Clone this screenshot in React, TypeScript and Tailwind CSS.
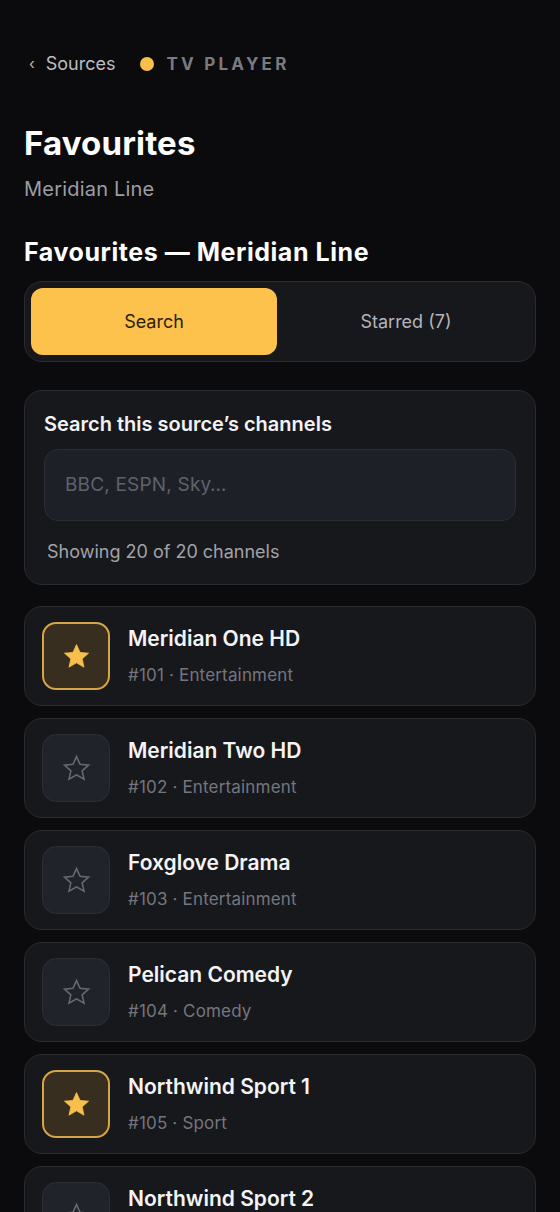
import React from "react";

const channels = [
  { num: 101, name: "Meridian One HD", cat: "Entertainment", starred: true },
  { num: 102, name: "Meridian Two HD", cat: "Entertainment", starred: false },
  { num: 103, name: "Foxglove Drama", cat: "Entertainment", starred: false },
  { num: 104, name: "Pelican Comedy", cat: "Comedy", starred: false },
  { num: 105, name: "Northwind Sport 1", cat: "Sport", starred: true },
  { num: 106, name: "Northwind Sport 2", cat: "Sport", starred: false },
];

function Star({ filled }: { filled: boolean }) {
  return (
    <svg width="31" height="31" viewBox="0 0 24 24">
      <path
        d="M12 2.8l2.75 6.02 6.58.62-4.96 4.38 1.44 6.45L12 16.9l-5.81 3.37 1.44-6.45-4.96-4.38 6.58-.62z"
        fill={filled ? "#f8c04b" : "none"}
        stroke={filled ? "#f8c04b" : "#676a72"}
        strokeWidth={filled ? 0.6 : 1.2}
        strokeLinejoin="miter"
      />
    </svg>
  );
}

export default function App() {
  return (
    <div
      className="min-h-[1212px] bg-[#0b0b0d] px-6 pt-[52px] text-white"
      style={{ fontFamily: "Inter, 'Noto Sans', sans-serif" }}
    >
      <div className="flex h-6 items-center">
        <span className="ml-[5px] text-[15px] leading-6 text-[#b9b9be]">‹</span>
        <span className="ml-[11px] text-[18px] leading-6 text-[#bcbcc1]">Sources</span>
        <span className="ml-[24px] h-[14px] w-[14px] rounded-full bg-[#f8c04b]"></span>
        <span className="ml-[13px] text-[17px] font-bold leading-6 tracking-[0.19em] text-[#7a7a80]">
          TV PLAYER
        </span>
      </div>

      <h1 className="mt-[47px] text-[33px] font-bold leading-10 tracking-[0.005em]">Favourites</h1>
      <div className="mt-3 text-[20px] leading-7 tracking-[0.01em] text-[#9d9da3]">Meridian Line</div>
      <h2 className="mt-[33px] text-[25px] font-bold leading-8 tracking-[0.022em]">
        Favourites — Meridian Line
      </h2>

      <div className="mt-[13px] flex h-[81px] gap-[6px] rounded-[18px] border border-[#2a2b31] bg-[#17181c] p-[6px]">
        <div className="flex flex-1 items-center justify-center rounded-[12px] bg-[#fdc24b] text-[18px] text-[#2a1e08]">
          Search
        </div>
        <div className="flex flex-1 items-center justify-center text-[18px] text-[#b4b4ba]">
          Starred (7)
        </div>
      </div>

      <div className="mt-[28px] rounded-[18px] border border-[#2a2b31] bg-[#17181c] px-[19px] pb-5 pt-5">
        <div className="text-[20px] font-semibold leading-[26px] text-[#f2f2f4]">
          Search this source’s channels
        </div>
        <div className="mt-3 flex h-[72px] items-center rounded-[14px] border border-[#2b2e36] bg-[#1e2028] px-5 text-[19px] tracking-[0.01em] text-[#5f626b]">
          BBC, ESPN, Sky…
        </div>
        <div className="mt-[19px] pl-[3px] text-[18px] leading-6 text-[#a2a2a8]">
          Showing 20 of 20 channels
        </div>
      </div>

      <div className="mt-[21px] flex flex-col gap-3 pb-10">
        {channels.map((c) => (
          <div
            key={c.num}
            className="flex h-[100px] items-center rounded-[18px] border border-[#2a2b31] bg-[#17181c] pl-[17px]"
          >
            <div
              className={
                c.starred
                  ? "flex h-[68px] w-[68px] items-center justify-center rounded-[14px] border-2 border-[#d6a548] bg-[#372e1f]"
                  : "flex h-[68px] w-[68px] items-center justify-center rounded-[14px] border border-[#2c2f36] bg-[#21232a]"
              }
            >
              <Star filled={c.starred} />
            </div>
            <div className="ml-[18px] flex flex-col">
              <div className="text-[21px] font-semibold leading-7 text-[#f4f4f6]">{c.name}</div>
              <div className="mt-[10px] text-[17px] leading-6 tracking-[0.01em] text-[#75767d]">
                #{c.num} · {c.cat}
              </div>
            </div>
          </div>
        ))}
      </div>
    </div>
  );
}
